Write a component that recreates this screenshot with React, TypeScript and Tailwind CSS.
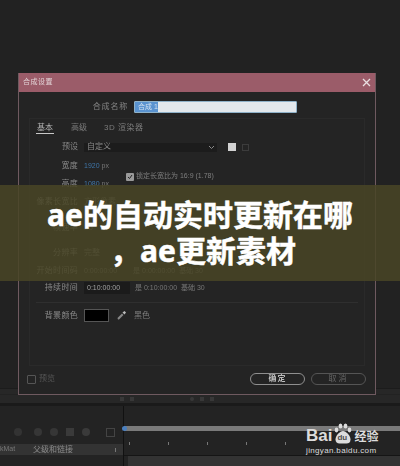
const cjk = "font-['Liberation_Sans','Noto_Sans_CJK_SC',sans-serif]";

function Row({ label, children, className = "h-[12px]" }: { label: string; children?: React.ReactNode; className?: string }) {
  return (
    <div className={`flex items-center ${className}`}>
      <span className="w-[48px] text-right text-[8px] tracking-[0.3px] whitespace-nowrap text-[#8b8b8b] shrink-0">{label}</span>
      <div className="flex items-center ml-[6px] text-[7px] text-[#777]">{children}</div>
    </div>
  );
}

function Dialog() {
  return (
    <div className="relative w-[358px] h-[322px] flex flex-col border border-[#6f5a60] border-t-0 bg-[#242424]">
      <div className="h-[19px] shrink-0 flex items-center justify-between bg-[#9b5c69] pl-[4px] pr-[4px] text-[7px] text-[#e2d3d6]">
        <span className="tracking-[0.5px]">合成设置</span>
        <svg width="9" height="9" viewBox="0 0 9 9" fill="none" stroke="#eadfe1" strokeWidth="1.3">
          <path d="M1 1l7 7M8 1l-7 7" />
        </svg>
      </div>
      <div className="flex items-center h-[12px] mt-[9px]">
        <span className="w-[109px] text-right text-[8px] tracking-[0.8px] text-[#858585]">合成名称</span>
        <div className="ml-[6px] w-[163px] h-[12px] flex bg-[#e3e8ec] rounded-[1px] border border-[#8fb2c9]">
          <span className="w-[23px] bg-[#5a93d0] text-[7px] leading-[10px] text-[#cfe0f0] pl-[3px]">合成 1</span>
        </div>
      </div>
      <div className="mx-[10px] mt-[5px] flex-1 flex flex-col border border-[#2a2a2a]">
        <div className="flex items-center gap-[17px] pl-[6px] h-[17px] text-[8px] text-[#7b7b7b]">
          <span className="text-[#b5b5b5] border-b border-[#c8c8c8] leading-[11px] px-px">基本</span>
          <span>高级</span>
          <span className="tracking-[0.5px]">3D 渲染器</span>
        </div>
        <div className="flex items-center mt-[6px] h-[10px]">
          <span className="w-[48px] text-right text-[8px] text-[#858585]">预设</span>
          <div className="ml-[6px] w-[133px] h-[9px] flex items-center justify-between bg-[#1c1c1c] pl-[3px] pr-[2px] text-[8px] text-[#8d8d8d]">
            <span>自定义</span>
            <svg width="7" height="5" viewBox="0 0 7 5" fill="none" stroke="#8a8a8a"><path d="M1 1l2.500 2.500L6 1" /></svg>
          </div>
          <div className="ml-[11px] w-[8px] h-[8px] bg-[#d2d2d2]" />
          <div className="ml-[6px] w-[7px] h-[7px] border border-[#3c3c3c]" />
        </div>
        <Row label="宽度" className="h-[12px] mt-[8px]">
          <span className="text-[#3f74a6]">1920</span>
          <span className="ml-[2px]">px</span>
        </Row>
        <div className="flex items-center h-[9px] ml-[96px] text-[7px] text-[#7f7f7f]">
          <span className="w-[8px] h-[8px] mr-[2px] rounded-[1px] bg-[#999] flex items-center justify-center">
            <svg width="6" height="6" viewBox="0 0 6 6" fill="none" stroke="#222" strokeWidth="1"><path d="M1 3l1.500 1.500L5 1" /></svg>
          </span>
          锁定长宽比为 16:9 (1.78)
        </div>
        <Row label="高度" className="h-[8px] -mt-[1px]">
          <span className="text-[#3f74a6]">1080</span>
          <span className="ml-[2px]">px</span>
        </Row>
        <Row label="像素长宽比" className="h-[12px] mt-[8px]">
          <span className="text-[8px]">方形像素</span>
        </Row>
        <Row label="帧速率" className="h-[12px] mt-[14px]">
          <span className="text-[8px]">25</span>
        </Row>
        <Row label="分辨率" className="h-[12px] mt-[13px]">
          <span className="text-[8px]">完整</span>
        </Row>
        <Row label="开始时间码" className="h-[12px] mt-[6px]">
          <span>0:00:00:00</span>
          <span className="ml-[16px]">是 0:00:00:00</span>
          <span className="ml-[4px]">基础 30</span>
        </Row>
        <Row label="持续时间" className="h-[12px] mt-[5px]">
          <span className="w-[46px] h-[12px] bg-[#1b1b1b] pl-[3px] leading-[12px] text-[#a0a0a0]">0:10:00:00</span>
          <span className="ml-[5px]">是 0:10:00:00</span>
          <span className="ml-[4px]">基础 30</span>
        </Row>
        <div className="h-px bg-[#2f2f2f] mx-[6px] mt-[8px]" />
        <div className="flex items-center mt-[6px] h-[13px]">
          <span className="w-[48px] text-right text-[8px] tracking-[0.3px] text-[#8b8b8b]">背景颜色</span>
          <div className="ml-[6px] w-[25px] h-[13px] bg-black border border-[#555]" />
          <svg className="ml-[7px]" width="11" height="11" viewBox="0 0 11 11" fill="none">
            <path d="M2 9.500L1.500 8 6 3.500 7.500 5 3 9.500z" fill="#888" />
            <path d="M6.500 2.500l2-1.500 1.500 1.500L8.500 4.500z" fill="#bdbdbd" />
          </svg>
          <span className="ml-[7px] text-[8px] text-[#7f7f7f]">黑色</span>
        </div>
      </div>
      <div className="flex items-center h-[28px] pl-[8px] pr-[9px] shrink-0 pb-[2px]">
        <span className="w-[9px] h-[9px] border border-[#555] rounded-[1px]" />
        <span className="ml-[3px] text-[8px] text-[#555]">预览</span>
        <div className="ml-auto flex gap-[6px]">
          <span className="w-[55px] h-[12px] flex items-center justify-center rounded-full border border-[#8f8f8f] text-[8px] font-bold tracking-[1px] text-[#bdbdbd]">确定</span>
          <span className="w-[55px] h-[12px] flex items-center justify-center rounded-full border border-[#555] text-[8px] tracking-[2px] text-[#666]">取消</span>
        </div>
      </div>
    </div>
  );
}

function Timeline() {
  return (
    <div className="flex-1 flex flex-col bg-[#232323]">
      <div className="h-[8px] flex items-center gap-[6px] pl-[120px] bg-[#272727]">
        <span className="w-[4px] h-[4px] bg-[#383838]" />
        <span className="w-[4px] h-[4px] bg-[#383838]" />
        <span className="ml-[50px] w-[4px] h-[4px] rounded-full bg-[#383838]" />
        <span className="w-[4px] h-[4px] bg-[#383838]" />
        <span className="w-[4px] h-[4px] bg-[#383838]" />
      </div>
      <div className="h-[3px] bg-[#1a1a1a]" />
      <div className="flex-1 flex">
        <div className="w-[124px] flex flex-col border-r border-[#111]">
          <div className="h-[38px] flex items-start gap-[8px] pt-[22px] pl-[14px]">
            <span className="w-[8px] h-[8px] rounded-full bg-[#333]" />
            <span className="ml-[4px] w-[8px] h-[8px] rounded-full bg-[#363636]" />
            <span className="w-[8px] h-[8px] rounded-full bg-[#363636]" />
            <span className="w-[8px] h-[8px] bg-[#3a3a3a]" />
            <span className="w-[8px] h-[8px] rounded-full bg-[#3a3a3a]" />
            <span className="ml-[8px] w-[9px] h-[9px] border border-[#444]" />
          </div>
          <div className="h-[11px] flex items-center bg-[#333] text-[7px] text-[#777]">
            <span className="w-[33px]">kMat</span>
            <span className="text-[8px] text-[#8a8a8a]">父级和链接</span>
            <span className="ml-[42px] w-px h-[4px] bg-[#777]" />
          </div>
        </div>
        <div className="flex-1 flex flex-col">
          <div className="relative h-[5px] mt-[20px] bg-[#7a7a7a]">
            <span className="absolute -left-[2px] top-0 w-[5px] h-[5px] rounded-full bg-[#4a7fbf]" />
          </div>
          <div className="h-[25px] flex items-center gap-[38px] pl-[5px] border-b border-[#151515]">
            {[0, 1, 2, 3, 4].map((i) => (
              <span key={i} className="w-px h-[3px] bg-[#777]" />
            ))}
          </div>
          <div className="flex-1 ml-[4px] bg-[#333]" />
        </div>
      </div>
    </div>
  );
}

function BaiduMark() {
  return (
    <div className="absolute left-[306px] top-[423px] flex flex-col items-start text-[#dcdcdc]">
      <div className="flex items-end h-[22px]">
        <span className="text-[17px] leading-[18px] font-bold">Bai</span>
        <span className="relative w-[20px] h-[22px] ml-px">
          <svg className="absolute inset-0" width="20" height="22" viewBox="0 0 20 22" fill="#dcdcdc">
            <ellipse cx="3.500" cy="7" rx="1.800" ry="2.400" />
            <ellipse cx="7.500" cy="3" rx="1.900" ry="2.600" />
            <ellipse cx="12.500" cy="3" rx="1.900" ry="2.600" />
            <ellipse cx="16.500" cy="7" rx="1.800" ry="2.400" />
            <path d="M10 8c3 0 7.500 4.500 7.500 8.500 0 3-2 4-4 4h-7c-2.300 0-4-1.200-4-4C2.500 12.500 7 8 10 8z" />
          </svg>
          <span className="absolute left-[4px] top-[11px] text-[8px] leading-[8px] font-bold text-[#4d4d4d]">du</span>
        </span>
        <span className="ml-px text-[12px] leading-[16px] font-bold">经验</span>
      </div>
      <span className="text-[8px] leading-[9px] tracking-[0.35px] mt-px">jingyan.baidu.com</span>
    </div>
  );
}

export default function App() {
  return (
    <div className={`relative w-[400px] h-[466px] overflow-hidden bg-[#222222] ${cjk}`}>
      <div className="flex flex-col h-full blur-[0.6px]">
        <div className="relative pt-[73px] pl-[18px] shrink-0">
          <div className="absolute left-0 top-[388px] w-full h-[6px] border-t border-[#1c1c1c] bg-[#272727]" />
          <Dialog />
        </div>
        <Timeline />
      </div>
      <div className="absolute left-0 top-[185px] w-full h-[96px] bg-[#494526]/85 flex items-center justify-center">
        <h1 className="text-center text-[30px] leading-[36px] font-bold whitespace-nowrap text-white [-webkit-text-stroke:0.5px_#ffffff] font-['Noto_Sans','Noto_Sans_CJK_SC',sans-serif]">
          <span className="block">ae的自动实时更新在哪</span>
          <span className="block ml-[6px]">，ae更新素材</span>
        </h1>
      </div>
      <BaiduMark />
    </div>
  );
}
